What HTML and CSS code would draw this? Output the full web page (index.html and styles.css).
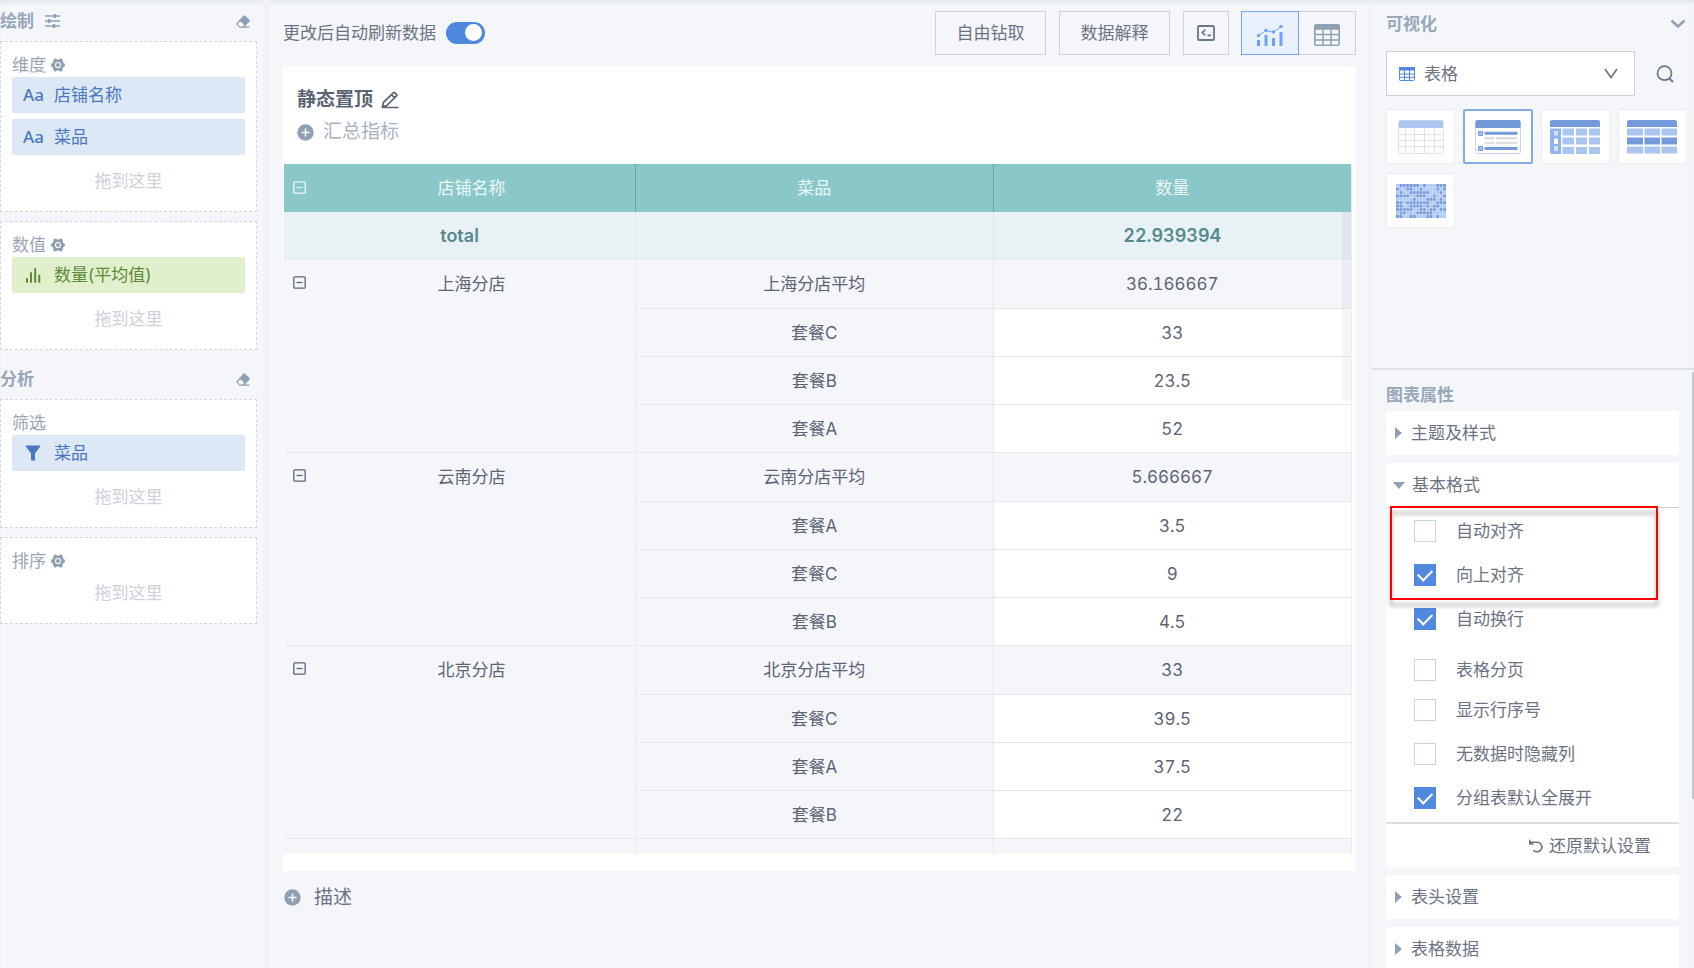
FILE: index.html
```
<!DOCTYPE html>
<html lang="zh-CN">
<head>
<meta charset="utf-8">
<title>静态置顶</title>
<link rel="stylesheet" href="styles.css">
</head>
<body>
<svg class="defs" width="0" height="0" aria-hidden="true">
  <symbol id="gear" viewBox="0 0 14 14"><path fill-rule="evenodd" d="M3.800.6Q5 .2 5.600 1.200Q7 2 8.400 1.200Q9 .2 10.200.6L11.200 1.200Q12 2 11.600 3.200Q11.800 4.600 13.200 5.200Q14 5.800 14 7T13.200 8.800Q11.800 9.400 11.600 10.800Q12 12 11.200 12.800L10.200 13.400Q9 13.800 8.400 12.800Q7 12 5.600 12.800Q5 13.800 3.800 13.400L2.800 12.800Q2 12 2.400 10.800Q2.200 9.400.8 8.800Q0 8.200 0 7T.8 5.200Q2.200 4.600 2.400 3.200Q2 2 2.800 1.200ZM7 3.900a3.100 3.100 0 1 0 0 6.200 3.100 3.100 0 0 0 0-6.200Z"/><circle cx="7" cy="7" r="2"/></symbol>
  <symbol id="eraser" viewBox="0 0 15 13"><path fill-rule="evenodd" d="M7.600.6q.6-.6 1.200 0L13.700 5q.6.600 0 1.200L8.800 11.500h4.700v1.300H3.800L.6 9.600Q0 8.800.7 8L7.600.6ZM4.200 6.300 2 8.700q-.3.400 0 .8l2 1.900h2.600l1.700-1.700Z"/></symbol>
  <symbol id="plus" viewBox="0 0 17 17"><circle cx="8.500" cy="8.500" r="8.200"/><path d="M8.500 4.500v8M4.500 8.500h8" stroke="#fff" stroke-width="1.500"/></symbol>
  <symbol id="fold" viewBox="0 0 13 13"><rect x=".8" y=".8" width="11.400" height="11.400" rx="1" fill="none" stroke="currentColor" stroke-width="1.300"/><path d="M3.500 6.500h6" stroke="currentColor" stroke-width="1.300"/></symbol>
</svg>
<div class="app">
  <aside class="fields">
    <header class="fields-title">
      <h2>绘制</h2>
      <svg class="tune" width="15" height="14" viewBox="0 0 15 14"><path d="M0 2h15M0 7h15M0 12h15" stroke="currentColor" stroke-width="1.700"/><path d="M9.800 0v4M4.200 5v4M9 10v4" stroke="currentColor" stroke-width="2.400"/></svg>
      <button class="icon-button push" aria-label="清空绘制"><svg width="15" height="13"><use href="#eraser"/></svg></button>
    </header>
    <section class="zone">
      <h3>维度 <svg width="14" height="14"><use href="#gear"/></svg></h3>
      <div class="chip"><span class="chip-type">Aa</span>店铺名称</div>
      <div class="chip"><span class="chip-type">Aa</span>菜品</div>
      <p>拖到这里</p>
    </section>
    <section class="zone">
      <h3>数值 <svg width="14" height="14"><use href="#gear"/></svg></h3>
      <div class="chip measure"><span class="chip-type"><svg width="16" height="16" viewBox="0 0 16 16"><path d="M2 15v-3M6 15v-9M10.200 15V2M14.300 15v-6.500" stroke="currentColor" stroke-width="2" stroke-linecap="round"/></svg></span>数量(平均值)</div>
      <p>拖到这里</p>
    </section>
    <header class="fields-title">
      <h2>分析</h2>
      <button class="icon-button push" aria-label="清空分析"><svg width="15" height="13"><use href="#eraser"/></svg></button>
    </header>
    <section class="zone">
      <h3>筛选</h3>
      <div class="chip"><span class="chip-type"><svg width="16" height="16" viewBox="0 0 16 16"><path d="M1 .5h14v1.300L10 8.500V15.500H6V8.500L1 1.800Z"/></svg></span>菜品</div>
      <p>拖到这里</p>
    </section>
    <section class="zone">
      <h3>排序 <svg width="14" height="14"><use href="#gear"/></svg></h3>
      <p>拖到这里</p>
    </section>
  </aside>

  <main class="stage">
    <div class="toolbar">
      <label class="auto">更改后自动刷新数据<input class="switch" type="checkbox" role="switch" checked></label>
      <button class="tool push">自由钻取</button>
      <button class="tool">数据解释</button>
      <button class="tool square" aria-label="代码"><svg width="18" height="16" viewBox="0 0 18 16"><rect x="1" y="1" width="16" height="14" rx="1" fill="none" stroke="currentColor" stroke-width="1.800"/><path d="M8.300 4.700 5.300 7.500l3 2.800M10.500 10.300H14" fill="none" stroke="currentColor" stroke-width="1.700"/></svg></button>
      <div class="views">
        <button class="view active" aria-label="图表"><svg width="28" height="24" viewBox="0 0 28 24"><path d="M2.500 17v6M10 12v11M17.500 15v8M25 9v14" stroke="currentColor" stroke-width="3"/><path d="M2.500 12.500 10 7.500l7.500 1.700L25 3.500" fill="none" stroke="currentColor"/><g><circle cx="2.500" cy="12.500" r="1.700"/><circle cx="10" cy="7.300" r="1.700"/><circle cx="17.500" cy="9" r="1.700"/><circle cx="25" cy="3.500" r="1.700"/></g></svg></button>
        <button class="view" aria-label="数据表"><svg width="26" height="22" viewBox="0 0 26 22"><rect x=".8" y=".8" width="24.400" height="20.400" rx="1.500" fill="none" stroke="currentColor" stroke-width="1.600"/><path d="M1 1h24v4.800H1Z"/><path d="M1 10.500h24M1 16h24M9 5v16M17 5v16" stroke="currentColor" stroke-width="1.500"/></svg></button>
      </div>
    </div>

    <section class="card">
      <div class="card-head">
        <h1>静态置顶 <svg width="18" height="18" viewBox="0 0 18 18"><path d="M1.500 15.500 2.500 11.300 12.300 1.800q.8-.8 1.600 0l1.600 1.500q.8.8 0 1.600L5.800 14.500ZM10.500 3.700l3.200 3.200M1 16.500h16.500" fill="none" stroke="currentColor" stroke-width="1.700"/></svg></h1>
        <button class="add"><svg width="17" height="17"><use href="#plus"/></svg>汇总指标</button>
      </div>
      <div class="table-wrap">
        <table>
          <thead>
            <tr><th class="group"><svg width="13" height="13"><use href="#fold"/></svg>店铺名称</th><th>菜品</th><th>数量</th></tr>
          </thead>
          <tbody>
            <tr class="total"><td>total</td><td></td><td>22.939394</td></tr>
            <tr class="sub"><td class="group" rowspan="4"><svg width="13" height="13"><use href="#fold"/></svg>上海分店</td><td>上海分店平均</td><td>36.166667</td></tr>
            <tr><td>套餐C</td><td class="value">33</td></tr>
            <tr><td>套餐B</td><td class="value">23.5</td></tr>
            <tr><td>套餐A</td><td class="value">52</td></tr>
            <tr class="sub"><td class="group" rowspan="4"><svg width="13" height="13"><use href="#fold"/></svg>云南分店</td><td>云南分店平均</td><td>5.666667</td></tr>
            <tr><td>套餐A</td><td class="value">3.5</td></tr>
            <tr><td>套餐C</td><td class="value">9</td></tr>
            <tr><td>套餐B</td><td class="value">4.5</td></tr>
            <tr class="sub"><td class="group" rowspan="4"><svg width="13" height="13"><use href="#fold"/></svg>北京分店</td><td>北京分店平均</td><td>33</td></tr>
            <tr><td>套餐C</td><td class="value">39.5</td></tr>
            <tr><td>套餐A</td><td class="value">37.5</td></tr>
            <tr><td>套餐B</td><td class="value">22</td></tr>
            <tr class="sub"><td></td><td></td><td></td></tr>
          </tbody>
        </table>
        <div class="table-scroll"></div>
      </div>
    </section>
    <button class="describe"><svg width="17" height="17"><use href="#plus"/></svg>描述</button>
  </main>

  <aside class="props">
    <section class="visual">
      <header class="visual-title"><h2>可视化</h2><button class="icon-button" aria-label="收起"><svg width="16" height="10" viewBox="0 0 16 10"><path d="m1.500 1.500 6.500 6 6.500-6" fill="none" stroke="currentColor" stroke-width="2.400"/></svg></button></header>
      <div class="picker">
        <div class="select-box">
          <svg class="select-icon" width="16" height="14" viewBox="0 0 16 14"><rect x=".5" y=".5" width="15" height="13" rx="1" fill="none" stroke="currentColor"/><path d="M0 0h16v3.500H0Z"/><path d="M0 7h16M0 10.300h16M5.500 3v11M10.500 3v11" stroke="currentColor"/></svg>
          <select aria-label="图表类型"><option>表格</option></select>
          <svg class="select-arrow" width="14" height="11" viewBox="0 0 14 11"><path d="m1 1 6 8.500L13 1" fill="none" stroke="currentColor" stroke-width="1.600"/></svg>
        </div>
        <button class="icon-button search" aria-label="搜索"><svg width="18" height="18" viewBox="0 0 18 18"><circle cx="8.500" cy="8.200" r="7" fill="none" stroke="currentColor" stroke-width="1.700"/><path d="m13 13 4 4" stroke="currentColor" stroke-width="1.900"/></svg></button>
      </div>
      <div class="thumbs">
        <button class="thumb" aria-label="表格"><svg width="50" height="34" viewBox="0 0 50 34"><rect x="2.500" y=".5" width="45" height="33" rx="2" fill="none" stroke="#dfe1e3"/><path d="M3 8V2q0-1.500 1.500-1.500h41Q47 .5 47 2v6Z" fill="#a9c5f0"/><path d="M3 14.500h44M3 20.500h44M3 26.500h44M9.500 8v25M18.500 8v25M28.500 8v25M38.500 8v25" stroke="#dfe1e3"/></svg></button>
        <button class="thumb active" aria-label="分组表"><svg width="50" height="34" viewBox="0 0 50 34"><rect x="2.500" y=".5" width="45" height="33" rx="2" fill="#fff" stroke="#c3d5f3"/><path d="M2.500 8V2Q2.500 0 4.500 0h41q2 0 2 2v6Z" fill="#759ad9"/><path d="M11.500 13.300h33M11.500 28.500h33" stroke="#759ad9" stroke-width="3"/><path d="M11.500 18.300h10M23 18.300h21.500M11.500 23h10M23 23h21.500" stroke="#dcdfde" stroke-width="2.600"/><path d="M5.500 11.500h4v4h-4ZM5.500 26.500h4v4h-4Z" fill="#a9c5f0" stroke="#759ad9"/></svg></button>
        <button class="thumb" aria-label="交叉表"><svg width="50" height="34" viewBox="0 0 50 34"><path d="M0 7V2q0-2 2-2h46q2 0 2 2v5Z" fill="#759ad9"/><path d="M0 8.500h11V34H2q-2 0-2-2Z" fill="#8fb3ea"/><path d="M4 11h4v4.500H4ZM4 26h4v5H4Z" fill="#d4e2f8"/><path d="M4 18.500h4V24H4Z" fill="#fff"/><path d="M12.500 12h11.500M26 12h11M39 12h11M12.500 21h11.500M26 21h11M39 21h11M12.500 30.500h11.500M26 30.500h11M39 30.500h11" stroke="#a9c5f0" stroke-width="7"/></svg></button>
        <button class="thumb" aria-label="明细表"><svg width="50" height="34" viewBox="0 0 50 34"><path d="M0 7V2q0-2 2-2h46q2 0 2 2v5Z" fill="#759ad9"/><path d="M0 12h16M17.500 12h15.500M34.500 12H50M0 30h16M17.500 30h15.500M34.500 30H50" stroke="#a9c5f0" stroke-width="7"/><path d="M0 21h16M17.500 21h15.500M34.500 21H50" stroke="#759ad9" stroke-width="7"/></svg></button>
        <button class="thumb" aria-label="热力图"><svg width="50" height="34" viewBox="0 0 50 34"><path d="M0 0h50v34H0Z" fill="#b0caf3"/><path d="M3.300 1.700H23M26.700 1.700H30M40 1.700h10M0 5.100h3.300M10 5.100h6.700M23.300 5.100h3.400M40 5.100h3.300M46.700 5.100H50M3.300 8.500h3.400M13.300 8.500h20M43.300 8.500h3.400M0 11.900h13.300M20 11.900h10M36.700 11.900H40M46.700 11.900H50M16.700 15.300H20M30 15.300h10M43.300 15.300h3.400M0 18.700h6.700M10 18.700h23.300M40 18.700h10M0 22.100h6.700M13.300 22.100h13.400M30 22.100h3.300M36.700 22.100h6.600M0 25.500h16.700M23.300 25.500H30M33.300 25.500H40M43.300 25.500h6.700M3.300 28.900H10M20 28.900h16.700M0 32.300h6.700M13.300 32.300h6.700M30 32.300h6.700M40 32.300h3.300" stroke="#759ad9" stroke-width="3.400"/><path d="M0 3.400h50M0 6.800h50M0 10.200h50M0 13.600h50M0 17h50M0 20.400h50M0 23.800h50M0 27.200h50M0 30.600h50M3.300 0v34M6.700 0v34M10 0v34M13.300 0v34M16.700 0v34M20 0v34M23.300 0v34M26.700 0v34M30 0v34M33.300 0v34M36.700 0v34M40 0v34M43.300 0v34M46.700 0v34" stroke="#d3e1f8" stroke-width=".7"/></svg></button>
      </div>
    </section>

    <section class="settings">
      <h2>图表属性</h2>
      <div class="panel"><button class="panel-head"><span class="caret"></span>主题及样式</button></div>
      <div class="panel">
        <button class="panel-head open"><span class="caret"></span>基本格式</button>
        <div class="options">
          <label><input type="checkbox">自动对齐</label>
          <label><input type="checkbox" checked>向上对齐</label>
          <label><input type="checkbox" checked>自动换行</label>
          <label class="spaced"><input type="checkbox">表格分页</label>
          <label><input type="checkbox">显示行序号</label>
          <label><input type="checkbox">无数据时隐藏列</label>
          <label><input type="checkbox" checked>分组表默认全展开</label>
          <div class="highlight"></div>
        </div>
        <button class="reset"><svg width="15" height="15" viewBox="0 0 15 15"><path d="M2.500 4.200H8.500a4.800 4.800 0 1 1-4 8" fill="none" stroke="currentColor" stroke-width="1.600"/><path d="M0 1v5.500l5 .3Z"/></svg>还原默认设置</button>
      </div>
      <div class="panel"><button class="panel-head"><span class="caret"></span>表头设置</button></div>
      <div class="panel"><button class="panel-head"><span class="caret"></span>表格数据</button></div>
      <div class="settings-scroll"></div>
    </section>
  </aside>
</div>
</body>
</html>
```
FILE: styles.css
```
* { box-sizing: border-box; }

body {
  margin: 0;
  background: #f4f6fa;
  color: #6b7383;
  font: 17px/24px Inter, "Noto Sans CJK SC", sans-serif;
}

h1, h2, h3, p { margin: 0; font-weight: 400; }
button, select, input { font: inherit; color: inherit; margin: 0; }
button { padding: 0; border: 0; background: none; cursor: pointer; }
svg { fill: currentColor; flex: none; }
.defs { position: absolute; }
.push { margin-left: auto; }
.icon-button { display: flex; align-items: center; justify-content: center; color: #8fa0b5; }

.app {
  display: flex;
  height: 100vh;
  overflow: hidden;
  box-shadow: inset 0 4px 4px -2px #dfe4e8;
}

/* Field zones */
.fields {
  flex: none;
  width: 270px;
  padding: 1px 6px 0 0;
  display: flex;
  flex-direction: column;
  border-right: 7px solid #f0f2f6;
}
.fields-title { display: flex; align-items: center; height: 40px; padding-right: 6px; color: #8fa0b5; }
.fields-title h2, .visual-title h2, .settings h2 { font-size: 17px; font-weight: 700; color: #98a7b9; }
.tune { margin-left: 11px; }
.zone {
  margin-bottom: 9px;
  padding: 11px 11px 9px;
  background: #fff;
  border: 1px dashed #d3d7e0;
}
.zone h3 { display: flex; align-items: center; gap: 5px; height: 24px; font-size: 17px; color: #98a5b6; }
.zone h3 svg { color: #8fa0b5; }
.chip {
  display: flex;
  align-items: center;
  height: 36px;
  margin-bottom: 6px;
  padding-left: 11px;
  border-radius: 2px;
  background: #dce8f6;
  color: #4b77be;
}
.chip.measure { background: #e1f0cc; color: #5c8a37; }
.chip-type { display: flex; width: 31px; font-family: "Noto Sans", sans-serif; font-size: 17px; font-weight: 500; }
.chip-type svg { margin-left: 2px; }
.zone p { line-height: 41px; text-align: center; color: #cdd1da; }

/* Centre stage */
.stage { flex: 1; min-width: 0; display: flex; flex-direction: column; padding: 10px 16px 0 13px; }
.toolbar { display: flex; align-items: center; height: 45px; margin-bottom: 11px; }
.auto { display: flex; align-items: center; gap: 10px; }
.switch {
  appearance: none;
  display: flex;
  align-items: center;
  width: 39px;
  height: 22px;
  border-radius: 11px;
  background: #4f87dd;
}
.switch::before { content: ""; width: 17px; height: 17px; margin-left: 19px; border-radius: 50%; background: #fff; }
.tool { height: 44px; width: 111px; border: 1px solid #ccd1dc; margin-right: 13px; }
.tool.push { margin-left: auto; }
.tool.square { display: flex; align-items: center; justify-content: center; width: 46px; margin-right: 12px; color: #6b7687; }
.views { display: flex; }
.view {
  display: flex;
  align-items: center;
  justify-content: center;
  width: 57px;
  height: 44px;
  padding-top: 4px;
  border: 1px solid #ccd1dc;
  border-left: 0;
  color: #8fa0b5;
}
.view.active { width: 58px; border: 1px solid #73a5f8; background: #eaf1fc; color: #6ca2fa; }

.card { flex: 1; min-height: 0; display: flex; flex-direction: column; background: #fff; padding: 0 4px 17px 1px; }
.card-head { padding: 22px 13px 20px; display: flex; flex-direction: column; align-items: flex-start; gap: 8px; }
.card-head h1 { display: flex; align-items: center; gap: 8px; font-size: 19px; font-weight: 700; color: #5a6474; }
.add { display: flex; align-items: center; gap: 9px; font-size: 19px; color: #a6b3c6; }
.add svg, .describe svg { color: #8fa0b5; }

.table-wrap { position: relative; flex: 1; min-height: 0; overflow: hidden; border-right: 1px solid #ebeef2; }
table { width: 100%; table-layout: fixed; border-collapse: separate; border-spacing: 0; color: #5d6474; font-variant-numeric: tabular-nums; }
th, td {
  height: 48px;
  padding: 0;
  text-align: center;
  border-right: 1px solid #e6e9ec;
  border-bottom: 1px solid #e6e9ec;
  background: #f4f6fa;
  font-weight: 400;
}
th:first-child { width: 33%; }
th:last-child, td:last-child { border-right: 0; }
th { background: #8ac7c8; color: #ecf8f8; border-right-color: #6aa5a8; border-bottom-color: #8ac7c8; }
.total td { background: #e8f1f3; color: #558a8d; font-size: 18px; font-weight: 600; }
.sub td { height: 49px; }
td.value { background: #fff; }
.group { position: relative; padding-left: 24px; }
td.group { padding-top: 12px; vertical-align: top; }
.group svg { position: absolute; left: 9px; top: 17px; }
td.group svg { top: 16px; }
.table-scroll { position: absolute; top: 48px; right: 0; width: 9px; height: 189px; border-radius: 0 0 4px 4px; background: rgba(60, 70, 80, .05); }

.describe { flex: none; display: flex; align-items: flex-start; gap: 13px; height: 97px; padding: 15px 1px; font-size: 19px; }
.describe svg { margin-top: 3px; }

/* Chart properties */
.props { flex: none; width: 322px; display: flex; flex-direction: column; box-shadow: -3px 0 4px #eff1f5; }
.visual { flex: none; height: 370px; padding: 4px 7px 0 14px; border-bottom: 2px solid #dcdfe5; }
.visual-title { display: flex; align-items: center; justify-content: space-between; height: 40px; margin-bottom: 7px; padding-right: 1px; }
.picker { display: flex; }
.select-box { position: relative; flex: 1; }
.select-box select {
  appearance: none;
  display: block;
  width: 100%;
  height: 45px;
  padding: 0 40px 0 37px;
  border: 1px solid #ccd0da;
  border-radius: 0;
  background: #fff;
}
.select-icon { position: absolute; left: 13px; top: 16px; color: #5089dd; }
.select-arrow { position: absolute; right: 17px; top: 17px; pointer-events: none; }
.search { width: 45px; margin-right: 7px; padding-left: 15px; color: #6b7687; }
.thumbs { display: grid; grid-template-columns: repeat(4, 1fr); gap: 9px 8px; margin-top: 13px; }
.thumb { display: flex; align-items: center; justify-content: center; height: 55px; border: 1px solid #eceef2; border-radius: 2px; background: #fff; }
.thumb.active { border: 2px solid #84aae8; }

.settings { position: relative; flex: 1; min-height: 0; overflow: hidden; padding: 13px 15px 0 14px; }
.settings h2 { margin-bottom: 4px; }
.panel { margin-bottom: 8px; background: #fff; }
.panel-head { display: flex; align-items: center; width: 100%; height: 44px; padding-left: 8px; }
.caret { width: 0; height: 0; margin: 0 9px 0 1px; border: solid transparent; border-width: 6px 0 6px 7px; border-left-color: #8fa0b5; }
.open .caret { margin: 0 7px 0 -1px; border-width: 7px 6px 0; border-color: #8fa0b5 transparent; }
.options { position: relative; padding: 1px 0 2px 28px; border-top: 1px solid #ccd0da; border-bottom: 2px solid #dcdee4; }
.options label { display: flex; align-items: center; gap: 20px; height: 44px; }
.options .spaced { height: 47px; padding-top: 10px; }
.options input {
  appearance: none;
  flex: none;
  display: flex;
  align-items: center;
  justify-content: center;
  width: 22px;
  height: 22px;
  border: 1px solid #cdd3df;
  background: #fff;
}
.options input:checked { border-color: #5089dd; background: #5089dd; }
.options input:checked::before {
  content: "";
  width: 12px;
  height: 7px;
  margin-bottom: 4px;
  border: solid #fff;
  border-width: 0 0 2px 2px;
  transform: rotate(-45deg);
}
.highlight {
  position: absolute;
  top: -2px;
  left: 4px;
  right: 21px;
  height: 94px;
  border: 2px solid #f00;
  filter: drop-shadow(0 6px 2px rgba(0, 0, 0, .35));
  pointer-events: none;
}
.reset { display: flex; align-items: center; gap: 5px; height: 43px; margin-left: auto; padding-right: 28px; }
.settings-scroll { position: absolute; top: 2px; right: 0; width: 2px; height: 427px; background: #c3c9d3; }
```
